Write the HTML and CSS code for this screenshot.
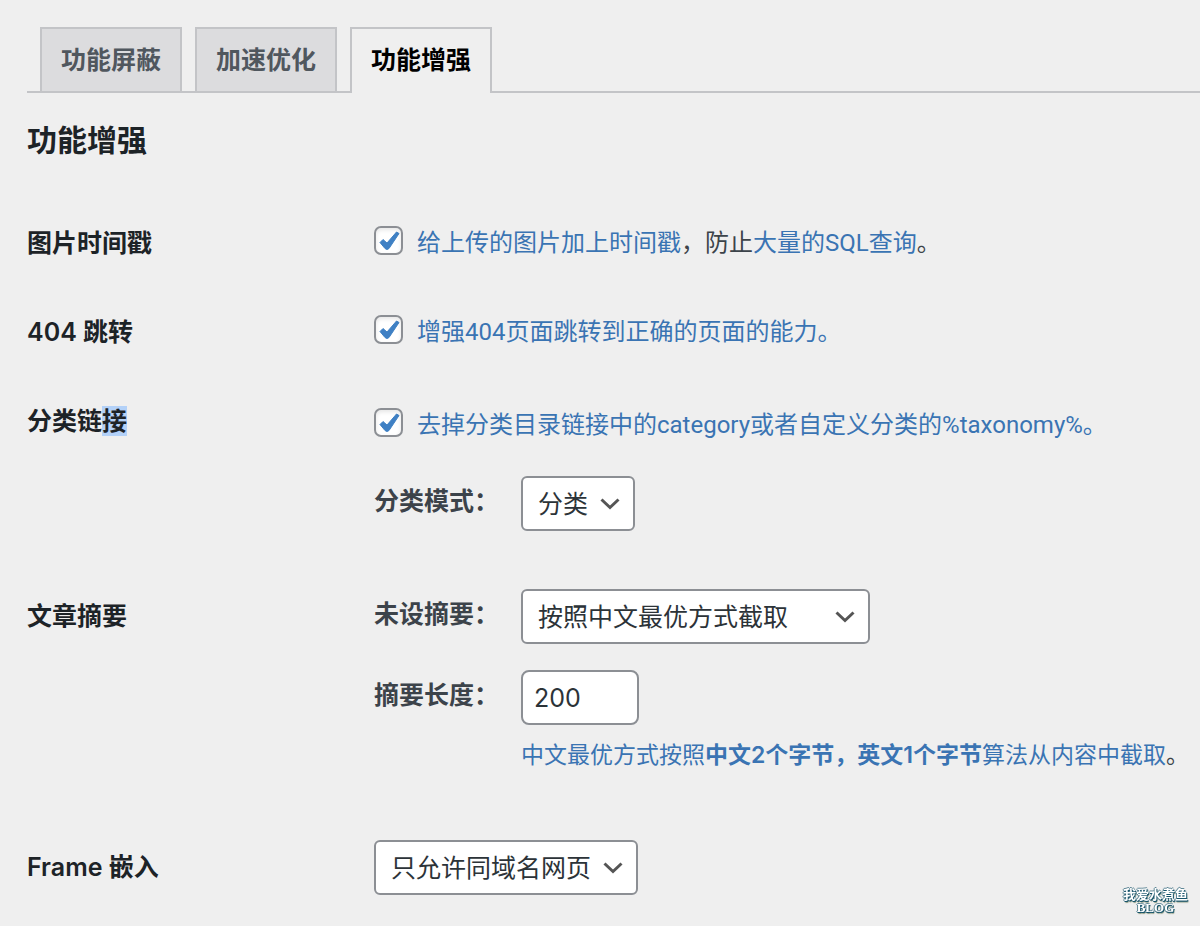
FILE: index.html
```html
<!DOCTYPE html>
<html lang="zh-CN">
<head>
<meta charset="UTF-8">
<meta name="viewport" content="width=device-width, initial-scale=1">
<title>功能增强</title>
<link rel="stylesheet" href="styles.css">
</head>
<body>

<main class="wrap">
  <nav class="nav-tabs">
    <a class="nav-tab" href="#block">功能屏蔽</a>
    <a class="nav-tab" href="#speed">加速优化</a>
    <a class="nav-tab nav-tab-active" href="#enhance">功能增强</a>
  </nav>

  <h2 class="title">功能增强</h2>

  <form class="form">
    <div class="row">
      <div class="row-label">图片时间戳</div>
      <div class="fields">
        <div class="check">
          <input type="checkbox" id="timestamp" checked>
          <label for="timestamp"><a href="#timestamp">给上传的图片加上时间戳</a>，防止<a href="#sql">大量的SQL查询</a>。</label>
        </div>
      </div>
    </div>

    <div class="row">
      <div class="row-label">404 跳转</div>
      <div class="fields">
        <div class="check">
          <input type="checkbox" id="redirect" checked>
          <label class="blue" for="redirect">增强404页面跳转到正确的页面的能力。</label>
        </div>
      </div>
    </div>

    <div class="row row-group">
      <div class="row-label">分类链<mark>接</mark></div>
      <div class="fields">
        <div class="check">
          <input type="checkbox" id="no-category" checked>
          <label class="blue" for="no-category">去掉分类目录链接中的category或者自定义分类的%taxonomy%。</label>
        </div>
        <div class="sub sub-after-check">
          <label class="sub-label" for="category-mode">分类模式：</label>
          <select id="category-mode">
            <option>分类</option>
          </select>
        </div>
      </div>
    </div>

    <div class="row row-group row-select">
      <div class="row-label">文章摘要</div>
      <div class="fields">
        <div class="sub">
          <label class="sub-label" for="excerpt-mode">未设摘要：</label>
          <select id="excerpt-mode" class="wide">
            <option>按照中文最优方式截取</option>
          </select>
        </div>
        <div class="sub sub-next">
          <label class="sub-label" for="excerpt-length">摘要长度：</label>
          <input type="text" class="small-text" id="excerpt-length" value="200">
        </div>
        <p class="note"><span class="blue">中文最优方式按照<strong>中文2个字节，英文1个字节</strong>算法从内容中截取</span>。</p>
      </div>
    </div>

    <div class="row row-select">
      <label class="row-label" for="frame">Frame 嵌入</label>
      <div class="fields">
        <select id="frame">
          <option>只允许同域名网页</option>
        </select>
      </div>
    </div>
  </form>
</main>

<div class="watermark">
  <span>我爱水煮鱼</span>
  <span class="watermark-blog">BLOG</span>
</div>

</body>
</html>
```
FILE: styles.css
```css
* {
  box-sizing: border-box;
}
body {
  margin: 0;
  background: #efefef;
  color: #3c434a;
  font-family: Inter, "Noto Sans CJK SC", sans-serif;
  font-size: 25px;
  line-height: 34px;
  overflow-x: hidden;
}
a, .blue {
  color: #3a74b3;
  text-decoration: none;
}
.wrap {
  padding: 27px 0 0 27px;
}

/* tabs */
.nav-tabs {
  display: flex;
  gap: 13px;
  padding-left: 13px;
  border-bottom: 2px solid #c3c4c7;
}
.nav-tab {
  padding: 14px 19px;
  border: 2px solid #c3c4c7;
  border-bottom: none;
  background: #dcdcde;
  color: #50575e;
  font-weight: 600;
}
.nav-tab-active {
  margin-bottom: -2px;
  padding-bottom: 16px;
  background: #efefef;
  color: #000;
}

.title {
  margin: 27px 0 40px;
  color: #1d2327;
  font-size: 30px;
  font-weight: 600;
  line-height: 40px;
}

/* settings rows */
.row {
  display: grid;
  grid-template-columns: 347px 1fr;
  padding-bottom: 29px;
}
.row-label {
  padding-top: 26px;
  color: #1d2327;
  font-weight: 600;
}
.row-label mark {
  background: #b3d1f8;
  color: inherit;
}
.fields {
  min-width: 0;
  padding-top: 26px;
}
.row-group {
  padding-bottom: 42px;
}
.row-group .fields {
  padding-top: 30px;
}
.row-select .fields {
  padding-top: 16px;
}

.check {
  display: flex;
  gap: 14px;
  font-family: Roboto, "Noto Sans CJK SC", sans-serif;
  font-size: 24px;
  white-space: nowrap;
}
.check input {
  appearance: none;
  flex: none;
  width: 29px;
  height: 29px;
  margin: 0;
  border: 2px solid #8c8f94;
  border-radius: 7px;
  background: #fff url("data:image/svg+xml,%3Csvg xmlns='http://www.w3.org/2000/svg' viewBox='0 0 25 25'%3E%3Cpath d='M4 14.5 7 11.5 11 15 20.5 4 23 5.5 13 20.5Q11 22.5 9 20.5Z' fill='%233f80c4' stroke='%233f80c4' stroke-width='1' stroke-linejoin='round'/%3E%3C/svg%3E") center / 25px 25px no-repeat;
  box-shadow: inset 0 2px 4px rgba(0, 0, 0, 0.1);
}

.sub {
  display: flex;
}
.sub-after-check {
  margin-top: 34px;
}
.sub-next {
  margin-top: 26px;
}
.sub-label {
  width: 147px;
  padding-top: 8px;
  font-weight: 600;
}

select, .small-text {
  height: 55px;
  border: 2px solid #8c8f94;
  border-radius: 6px;
  background-color: #fff;
  color: #2c3338;
  font: inherit;
}
select {
  appearance: none;
  padding: 0 44px 0 15px;
  background-image: url("data:image/svg+xml,%3Csvg xmlns='http://www.w3.org/2000/svg' viewBox='0 0 20 12'%3E%3Cpath d='M1.5 1.5 10 9.5 18.5 1.5' fill='none' stroke='%23555' stroke-width='3'/%3E%3C/svg%3E");
  background-repeat: no-repeat;
  background-position: right 13px center;
  background-size: 20px 12px;
}
.wide {
  width: 349px;
}
.small-text {
  width: 118px;
  padding: 0 11px;
  border-radius: 8px;
}
.note {
  margin: 13px 0 10px 147px;
  font-size: 23px;
  white-space: nowrap;
}
.note strong {
  font-weight: 600;
}

/* site mark in the corner */
.watermark {
  position: fixed;
  right: 12px;
  bottom: 12px;
  display: flex;
  flex-direction: column;
  align-items: center;
  color: #fff;
  font-family: "Liberation Serif", "Noto Sans CJK SC", serif;
  font-size: 13px;
  font-weight: 700;
  line-height: 13px;
  text-shadow: 1px 1px #17546b, -1px 0 #5f8796, 0 1px #17546b, 0 -1px #5f8796, 1px 2px 1px #8c9a80;
}
```
